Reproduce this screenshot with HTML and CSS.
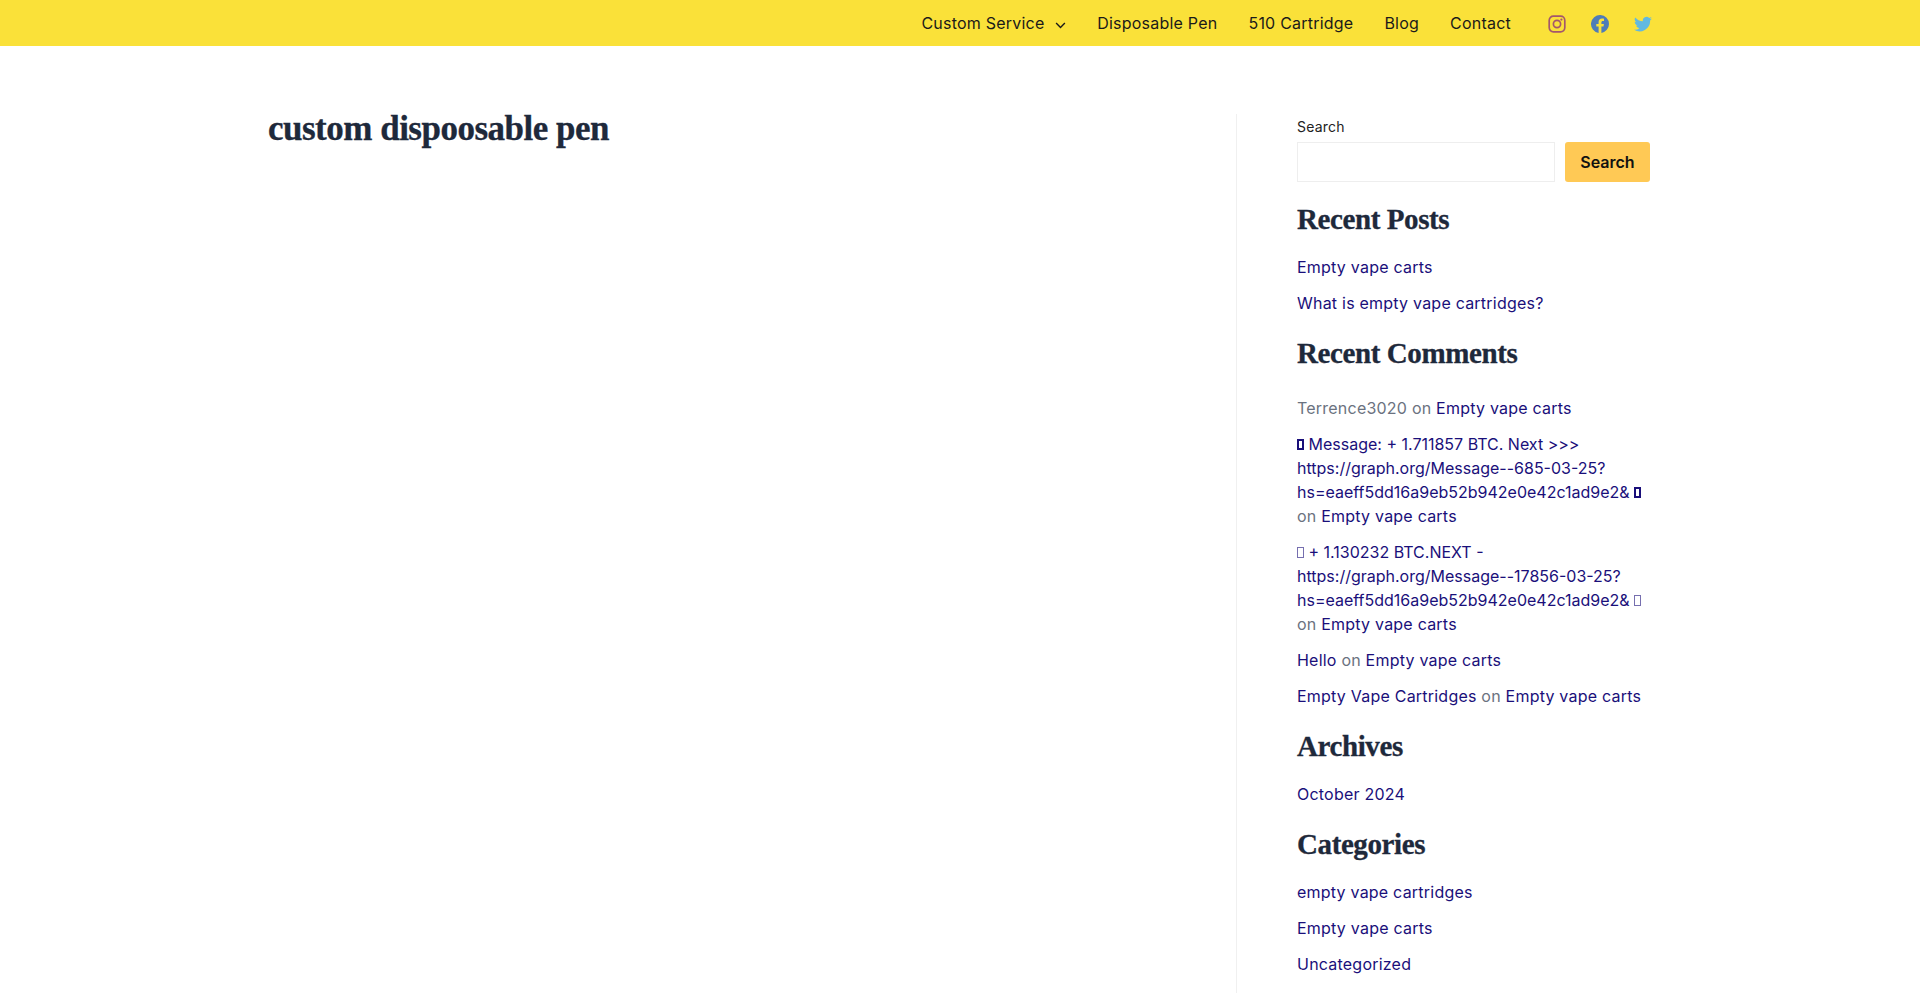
FILE: index.html
```html
<!DOCTYPE html>
<html lang="en">
<head>
    <meta charset="UTF-8">
    <meta name="viewport" content="width=device-width, initial-scale=1.0">
    <title>custom dispoosable pen</title>
    <link rel="stylesheet" href="styles.css">
</head>
<body>
    <header class="topbar">
        <nav class="topbar-inner">
            <ul class="menu">
                <li><a href="#">Custom Service <svg class="caret" viewBox="0 0 12 8" width="11" height="7"><path d="M1 1.2l5 5 5-5" fill="none" stroke="currentColor" stroke-width="1.6"/></svg></a></li>
                <li><a href="#">Disposable Pen</a></li>
                <li><a href="#">510 Cartridge</a></li>
                <li><a href="#">Blog</a></li>
                <li><a href="#">Contact</a></li>
            </ul>
            <div class="social">
                <a href="#"><svg viewBox="0 0 18 18" width="18" height="18"><rect x="1.2" y="1.2" width="15.6" height="15.6" rx="4.2" fill="none" stroke="#a4566c" stroke-width="1.7"/><circle cx="9" cy="9" r="3.6" fill="none" stroke="#a4566c" stroke-width="1.7"/><circle cx="13.4" cy="4.6" r="1.1" fill="#a4566c"/></svg></a>
                <a href="#"><svg viewBox="0 0 18 18" width="18" height="18"><path d="M18 9a9 9 0 1 0-10.4 8.9v-6.3H5.3V9h2.3V7c0-2.3 1.3-3.5 3.4-3.5 1 0 2 .2 2 .2v2.2h-1.1c-1.1 0-1.5.7-1.5 1.4V9h2.5l-.4 2.6h-2.1v6.3A9 9 0 0 0 18 9z" fill="#4f7cb8"/></svg></a>
                <a href="#"><svg viewBox="0 0 18 18" width="18" height="18"><path d="M18 3.4c-.7.3-1.4.5-2.1.6.8-.5 1.3-1.2 1.6-2-.7.4-1.5.7-2.3.9a3.7 3.7 0 0 0-6.3 3.4C5.800 6.100 3.100 4.600 1.300 2.400a3.700 3.700 0 0 0 1.100 4.900c-.6 0-1.200-.2-1.700-.5 0 1.800 1.300 3.300 3 3.700-.5.100-1.100.2-1.700.1.500 1.500 1.800 2.500 3.400 2.600A7.400 7.400 0 0 1 0 14.700a10.500 10.500 0 0 0 16.100-9.300c.8-.5 1.400-1.200 1.900-2z" fill="#62b9e0"/></svg></a>
            </div>
        </nav>
    </header>

    <div class="wrap">
        <main class="content">
            <h1>custom dispoosable pen</h1>
        </main>

        <aside class="sidebar">
            <form class="search">
                <label for="s">Search</label>
                <div class="search-row">
                    <input id="s" type="text">
                    <button type="button">Search</button>
                </div>
            </form>

            <section class="widget">
                <h2>Recent Posts</h2>
                <ul>
                    <li><a href="#">Empty vape carts</a></li>
                    <li><a href="#">What is empty vape cartridges?</a></li>
                </ul>
            </section>

            <section class="widget">
                <h2>Recent Comments</h2>
                <ul class="comments">
                    <li>Terrence3020 on <a href="#">Empty vape carts</a></li>
                    <li><a href="#" class="url"><span class="tofu bold"></span> Message: + 1.711857 BTC. Next &gt;&gt;&gt; https://graph.org/Message--685-03-25?hs=eaeff5dd16a9eb52b942e0e42c1ad9e2&amp; <span class="tofu bold"></span></a> on <a href="#">Empty vape carts</a></li>
                    <li><a href="#" class="url"><span class="tofu"></span> + 1.130232 BTC.NEXT - https://graph.org/Message--17856-03-25?hs=eaeff5dd16a9eb52b942e0e42c1ad9e2&amp; <span class="tofu"></span></a> on <a href="#">Empty vape carts</a></li>
                    <li><a href="#">Hello</a> on <a href="#">Empty vape carts</a></li>
                    <li><a href="#">Empty Vape Cartridges</a> on <a href="#">Empty vape carts</a></li>
                </ul>
            </section>

            <section class="widget">
                <h2>Archives</h2>
                <ul>
                    <li><a href="#">October 2024</a></li>
                </ul>
            </section>

            <section class="widget">
                <h2>Categories</h2>
                <ul>
                    <li><a href="#">empty vape cartridges</a></li>
                    <li><a href="#">Empty vape carts</a></li>
                    <li><a href="#">Uncategorized</a></li>
                </ul>
            </section>
        </aside>
    </div>
</body>
</html>
```

FILE: styles.css
```css
html {
    overflow: hidden;
    height: 100%;
}
body {
    font-family: Inter, "Open Sans", sans-serif;
    font-size: 16px;
    line-height: 24px;
    letter-spacing: 0.22px;
    color: #6b7280;
    background-color: #fff;
    margin: 0;
    height: 100%;
    overflow: hidden;
}
a {
    color: #1a0f7a;
    text-decoration: none;
}
a.url {
    letter-spacing: 0;
}
ul {
    list-style: none;
    margin: 0;
    padding: 0;
}
.topbar {
    background-color: #fae139;
    height: 46px;
}
.topbar-inner {
    width: 1384px;
    margin: 0 auto;
    height: 100%;
    display: flex;
    justify-content: flex-end;
    align-items: center;
}
.menu {
    display: flex;
    gap: 31px;
}
.menu a {
    color: #1a1a1a;
    font-size: 16px;
}
.caret {
    margin-left: 6px;
}
.social {
    display: flex;
    gap: 25px;
    margin-left: 37px;
    padding-top: 1px;
}
.social a {
    display: block;
    height: 18px;
}
.wrap {
    box-sizing: border-box;
    width: 1384px;
    padding-right: 2px;
    margin: 68px auto 0;
    display: flex;
}
.content {
    width: 968px;
    flex-shrink: 0;
}
h1, h2 {
    font-family: "Liberation Serif", serif;
    font-weight: 700;
    color: #1e293b;
    margin: 0;
    -webkit-text-stroke: 0.3px #1e293b;
}
h1 {
    font-size: 35px;
    line-height: 30px;
    letter-spacing: -0.5px;
}
.sidebar {
    flex: 1;
    border-left: 1px solid #f0f0f0;
    padding-left: 60px;
    padding-top: 3px;
    height: 900px;
}
.search label {
    display: block;
    font-size: 14px;
    line-height: 20px;
    color: #222;
    margin-bottom: 5px;
}
.search-row {
    display: flex;
    gap: 10px;
}
.search input {
    flex: 1;
    min-width: 0;
    height: 40px;
    box-sizing: border-box;
    border: 1px solid #eee;
    background: #fff;
}
.search button {
    width: 85px;
    height: 40px;
    border: none;
    border-radius: 3px;
    background-color: #ffc955;
    color: #111;
    font-family: inherit;
    font-size: 16px;
    font-weight: 600;
}
.widget {
    margin-top: 19px;
}
.widget + .widget {
    margin-top: 20px;
}
.widget h2 {
    font-size: 29px;
    line-height: 36px;
    letter-spacing: -0.4px;
    margin-bottom: 18px;
}
.widget li {
    margin-bottom: 12px;
}
.comments {
    padding-top: 7px;
}
.tofu {
    display: inline-block;
    width: 7px;
    height: 11px;
    border: 1px solid currentColor;
    box-sizing: border-box;
    opacity: 0.6;
}
.tofu.bold {
    border-width: 2px;
    opacity: 1;
}
```
